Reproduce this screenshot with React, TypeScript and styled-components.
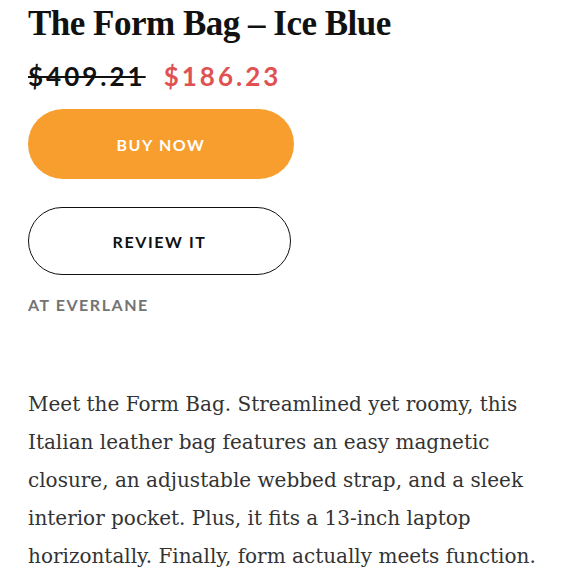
import React from 'react';
import styled, {createGlobalStyle} from "styled-components";

const GlobalStyle = createGlobalStyle`
    body {
        margin: 0;
        background: #ffffff;
    }
`

export default function App() {
    return (
        <>
            <GlobalStyle/>
            <StyledProduct>
                <Title>The Form Bag – Ice Blue</Title>
                <PriceRow>
                    <Price old>$409.21</Price>
                    <Price>$186.23</Price>
                </PriceRow>
                <Button btnType={'primary'}>Buy now</Button>
                <Button btnType={'outline'}>Review it</Button>
                <Store>At Everlane</Store>
                <Description>
                    Meet the Form Bag. Streamlined yet roomy, this Italian leather bag features an easy
                    magnetic closure, an adjustable webbed strap, and a sleek interior pocket. Plus, it
                    fits a 13-inch laptop horizontally. Finally, form actually meets function.
                </Description>
            </StyledProduct>
        </>
    );
}

const StyledProduct = styled.section`
    padding: 0 28px;
    display: flex;
    flex-direction: column;
    align-items: flex-start;
`

const Title = styled.h1`
    margin: 3px 0 0;
    font-family: "Liberation Serif", serif;
    font-weight: 700;
    font-size: 35px;
    line-height: 42px;
    color: #111;
    letter-spacing: -0.5px;
`

const PriceRow = styled.div`
    display: flex;
    gap: 18px;
    margin-top: 15px;
`

type PricePropsType = {
    old?: boolean
}

const Price = styled.span<PricePropsType>`
    font-family: Lato, sans-serif;
    font-weight: 700;
    font-size: 26px;
    line-height: 32px;
    letter-spacing: 3px;
    color: ${props => props.old ? '#111' : '#e05252'};
    text-decoration: ${props => props.old ? 'line-through' : 'none'};
    text-decoration-thickness: 2px;
`

type ButtonPropsType = {
    btnType: 'primary' | 'outline'
}

const Button = styled.button<ButtonPropsType>`
    margin-top: ${props => props.btnType === 'primary' ? '17px' : '28px'};
    width: ${props => props.btnType === 'primary' ? '266px' : '263px'};
    height: ${props => props.btnType === 'primary' ? '70px' : '68px'};
    border-radius: 35px;
    border: ${props => props.btnType === 'primary' ? 'none' : '1.5px solid #111'};
    background: ${props => props.btnType === 'primary' ? '#f79e2f' : '#fff'};
    color: ${props => props.btnType === 'primary' ? '#fff' : '#111'};
    font-family: Lato, sans-serif;
    font-weight: 700;
    font-size: 16px;
    letter-spacing: 1.6px;
    text-transform: uppercase;
    cursor: pointer;
`

const Store = styled.div`
    margin-top: 20px;
    font-family: Lato, sans-serif;
    font-weight: 700;
    font-size: 16px;
    letter-spacing: 1.55px;
    color: #737373;
    text-transform: uppercase;
`

const Description = styled.p`
    margin: 71px 0 0;
    max-width: 524px;
    font-family: "DejaVu Serif", serif;
    font-size: 20px;
    line-height: 38px;
    color: #333;
`
